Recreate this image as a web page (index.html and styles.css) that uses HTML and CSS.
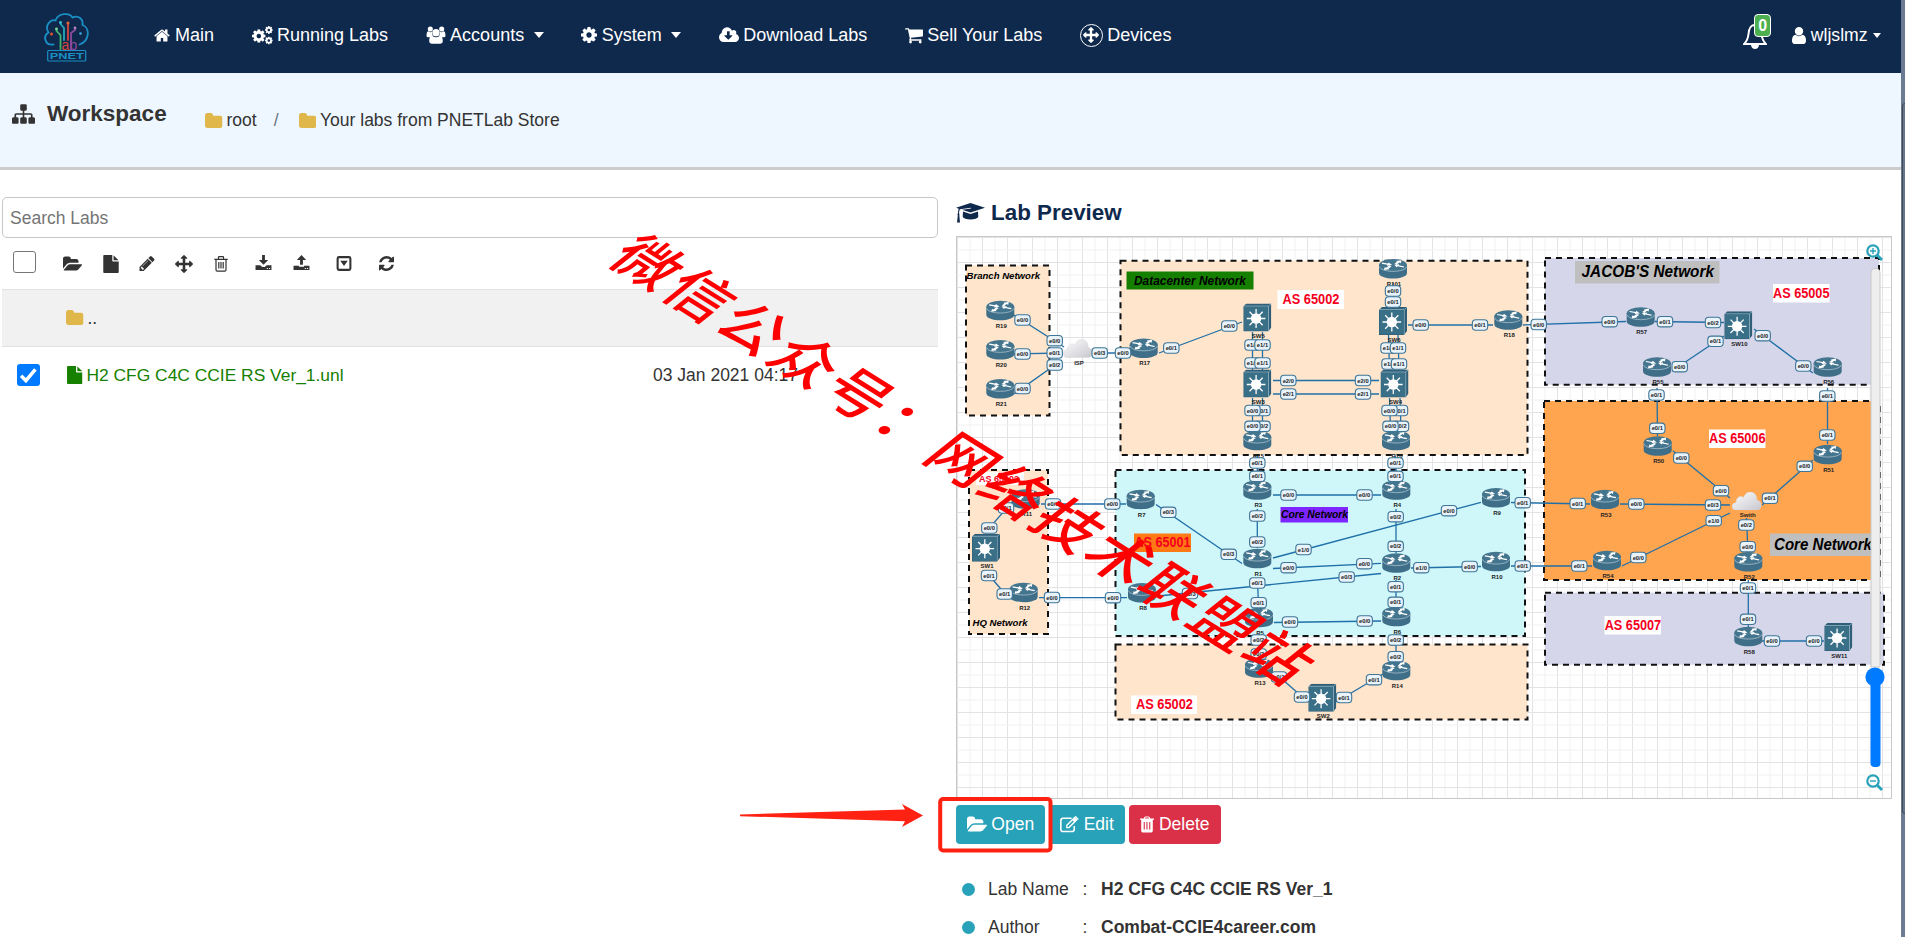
FILE: index.html
```html
<!DOCTYPE html>
<html lang="en">
<head>
<meta charset="utf-8">
<title>PNETLab - Workspace</title>
<link rel="stylesheet" href="styles.css">
</head>
<body>
<svg class="sprite" aria-hidden="true">
  <symbol id="home" viewBox="0 0 1792 1792"><path d="M1472 992v480q0 26-19 45t-45 19h-384v-384h-256v384h-384q-26 0-45-19t-19-45v-480q0-1 .5-3t.5-3l575-474 575 474q1 2 1 6zm223-69l-62 74q-8 9-21 11h-3q-13 0-21-7l-692-577-692 577q-12 8-24 7-13-2-21-11l-62-74q-8-10-7-23.5t11-21.5l719-599q32-26 76-26t76 26l244 204v-195q0-14 9-23t23-9h192q14 0 23 9t9 23v408l219 182q10 8 11 21.5t-7 23.5z"/></symbol>
  <symbol id="cog" viewBox="128 128 1536 1536"><path d="M1152 896q0-106-75-181t-181-75-181 75-75 181 75 181 181 75 181-75 75-181zm512-109v222q0 12-8 23t-20 13l-185 28q-19 54-39 91 35 50 107 138 10 12 10 25t-9 23q-27 37-99 108t-94 71q-12 0-26-9l-138-108q-44 23-91 38-16 136-29 186-7 28-36 28h-222q-14 0-24.5-8.5t-11.5-21.5l-28-184q-49-16-90-37l-141 107q-10 9-25 9-14 0-25-11-126-114-165-168-7-10-7-23 0-12 8-23 15-21 51-66.5t54-70.5q-27-50-41-99l-183-27q-13-2-21-12.5t-8-23.5v-222q0-12 8-23t19-13l186-28q14-46 39-92-40-57-107-138-10-12-10-24 0-10 9-23 26-36 98.5-107.5t94.5-71.5q13 0 26 10l138 107q44-23 91-38 16-136 29-186 7-28 36-28h222q14 0 24.5 8.5t11.5 21.5l28 184q49 16 90 37l142-107q9-9 24-9 13 0 25 10 129 119 165 170 7 8 7 22 0 12-8 23-15 21-51 66.5t-54 70.5q26 50 41 98l183 28q13 2 21 12.5t8 23.5z"/></symbol>
  <symbol id="cogs" viewBox="0 0 20 18"><use href="#cog" x="0" y="3" width="13" height="13"/><use href="#cog" x="12.3" y="0" width="7.5" height="7.5"/><use href="#cog" x="12.3" y="10" width="7.5" height="7.5"/></symbol>
  <symbol id="users" viewBox="0 0 20 19"><circle cx="4" cy="3.2" r="2.7"/><circle cx="16" cy="3.2" r="2.7"/><path d="M0 10.500C0 7 .8 5.600 2 5.600q2 1.600 4 .4-.8 3.400.8 4.500-2 .3-2.600 1.500H1.600Q0 12 0 10.500zM20 10.500C20 7 19.200 5.600 18 5.600q-2 1.600-4 .4.8 3.400-.8 4.500 2 .3 2.600 1.500h2.600Q20 12 20 10.500z"/><circle cx="10" cy="7" r="3.900"/><path d="M2.800 16.200c0-4 1-5.700 3.400-5.700q3.800 2.600 7.600 0c2.400 0 3.400 1.700 3.400 5.700q0 2.500-2.500 2.500H5.300q-2.500 0-2.500-2.500z"/></symbol>
  <symbol id="cloud" viewBox="-64 128 1920 1472"><path d="M1216 928q0-14-9-23t-23-9h-224v-352q0-13-9.500-22.500t-22.500-9.500h-192q-13 0-22.500 9.500t-9.500 22.500v352h-224q-13 0-22.500 9.500t-9.500 22.500q0 14 9 23l352 352q9 9 23 9t23-9l351-351q10-12 10-24zm640 224q0 159-112.500 271.500t-271.500 112.500h-1088q-185 0-316.500-131.500t-131.500-316.500q0-130 70-240t188-165q-2-30-2-43 0-212 150-362t362-150q156 0 285.500 87t188.500 231q71-62 166-62 106 0 181 75t75 181q0 76-41 138 130 31 213.500 135.500t83.500 238.500z"/></symbol>
  <symbol id="cart" viewBox="64 192 1664 1472"><path d="M704 1536q0 52-38 90t-90 38-90-38-38-90 38-90 90-38 90 38 38 90zm896 0q0 52-38 90t-90 38-90-38-38-90 38-90 90-38 90 38 38 90zm128-1088v512q0 24-16.500 42.500t-40.500 21.500l-1044 122q13 60 13 70 0 16-24 64h920q26 0 45 19t19 45-19 45-45 19h-1024q-26 0-45-19t-19-45q0-11 8-31.500t16-36 21.500-40 15.500-29.500l-177-823h-204q-26 0-45-19t-19-45 19-45 45-19h256q16 0 28.500 6.500t19.500 15.500 13 24.500 8 26 5.500 29.500 4.500 26h1201q26 0 45 19t19 45z"/></symbol>
  <symbol id="arrows" viewBox="0 0 1792 1792"><path d="M1792 896q0 26-19 45l-256 256q-19 19-45 19t-45-19-19-45v-128h-384v384h128q26 0 45 19t19 45-19 45l-256 256q-19 19-45 19t-45-19l-256-256q-19-19-19-45t19-45 45-19h128v-384h-384v128q0 26-19 45t-45 19-45-19l-256-256q-19-19-19-45t19-45l256-256q19-19 45-19t45 19 19 45v128h384v-384h-128q-26 0-45-19t-19-45 19-45l256-256q19-19 45-19t45 19l256 256q19 19 19 45t-19 45-45 19h-128v384h384v-128q0-26 19-45t45-19 45 19l256 256q19 19 19 45z"/></symbol>
  <symbol id="user" viewBox="256 128 1280 1536"><path d="M1536 1399q0 109-62.500 187t-150.500 78h-854q-88 0-150.500-78t-62.500-187q0-85 8.500-160.500t31.500-152 58.500-131 94-89 134.500-34.500q131 128 313 128t313-128q76 0 134.500 34.500t94 89 58.500 131 31.500 152 8.500 160.500zm-256-887q0 159-112.500 271.500t-271.500 112.500-271.500-112.500-112.500-271.500 112.500-271.500 271.500-112.500 271.500 112.500 112.500 271.500z"/></symbol>
  <symbol id="sitemap" viewBox="0 128 1792 1536"><path d="M1792 1248v320q0 40-28 68t-68 28h-320q-40 0-68-28t-28-68v-320q0-40 28-68t68-28h96v-192h-512v192h96q40 0 68 28t28 68v320q0 40-28 68t-68 28h-320q-40 0-68-28t-28-68v-320q0-40 28-68t68-28h96v-192h-512v192h96q40 0 68 28t28 68v320q0 40-28 68t-68 28h-320q-40 0-68-28t-28-68v-320q0-40 28-68t68-28h96v-192q0-52 38-90t90-38h512v-192h-96q-40 0-68-28t-28-68v-320q0-40 28-68t68-28h320q40 0 68 28t28 68v320q0 40-28 68t-68 28h-96v192h512q52 0 90 38t38 90v192h96q40 0 68 28t28 68z"/></symbol>
  <symbol id="folder" viewBox="64 128 1664 1408"><path d="M1728 608v704q0 92-66 158t-158 66h-1216q-92 0-158-66t-66-158v-960q0-92 66-158t158-66h320q92 0 158 66t66 158v32h672q92 0 158 66t66 158z"/></symbol>
  <symbol id="folder-open" viewBox="-64 128 1880 1408"><path d="M1815 952q0 31-31 66l-336 396q-43 51-120.500 86.500t-143.500 35.500h-1088q-34 0-60.500-13t-26.500-43q0-31 31-66l336-396q43-51 120.500-86.500t143.500-35.500h1088q34 0 60.500 13t26.500 43zm-343-344v160h-832q-94 0-197 47.500t-164 119.500l-337 396-5 6q0-4-.5-12.500t-.5-12.500v-960q0-92 66-158t158-66h320q92 0 158 66t66 158v32h544q92 0 158 66t66 158z"/></symbol>
  <symbol id="file" viewBox="128 0 1536 1792"><path d="M1152 512v-472q22 14 36 28l408 408q14 14 28 36h-472zm-128 32q0 40 28 68t68 28h544v1056q0 40-28 68t-68 28h-1344q-40 0-68-28t-28-68v-1600q0-40 28-68t68-28h800v544z"/></symbol>
  <symbol id="pencil" viewBox="128 140 1520 1524"><path d="M491 1536l91-91-235-235-91 91v107h128v128h107zm523-928q0-22-22-22-10 0-17 7l-542 542q-7 7-7 17 0 22 22 22 10 0 17-7l542-542q7-7 7-17zm-54-192l416 416-832 832h-416v-416zm683 96q0 53-37 90l-166 166-416-416 166-165q36-38 90-38 53 0 91 38l235 234q37 39 37 91z"/></symbol>
  <symbol id="refresh" viewBox="128 128 1536 1536"><path d="M1639 1056q0 5-1 7-64 268-268 434.500t-478 166.500q-146 0-282.500-55t-243.500-157l-129 129q-19 19-45 19t-45-19-19-45v-448q0-26 19-45t45-19h448q26 0 45 19t19 45-19 45l-137 137q71 66 161 102t187 36q134 0 250-65t186-179q11-17 53-117 8-23 30-23h192q13 0 22.500 9.500t9.500 22.500zm25-800v448q0 26-19 45t-45 19h-448q-26 0-45-19t-19-45 19-45l138-138q-148-137-349-137-134 0-250 65t-186 179q-11 17-53 117-8 23-30 23h-199q-13 0-22.500-9.500t-9.500-22.500v-7q65-268 270-434.500t480-166.500q146 0 284 55.500t245 156.500l130-129q19-19 45-19t45 19 19 45z"/></symbol>
  <symbol id="trash-o" viewBox="0 0 14 16"><path fill="none" stroke="currentColor" stroke-width="1.200" d="M.3 3.300h13.400M4.500 3V1.300q0-.6.6-.6h3.800q.6 0 .6.6V3M2 3.500v10.300q0 1.300 1.200 1.300h7.600q1.200 0 1.200-1.300V3.500M4.800 6v6.500M7 6v6.500M9.200 6v6.500"/></symbol>
  <symbol id="trash" viewBox="0 0 14 16"><path fill-rule="evenodd" d="M0 3V2h3.700l.8-1.500Q4.800 0 5.400 0h3.200q.6 0 .9.500L10.300 2H14v1.200h-1.200v11Q12.800 16 11.300 16H2.700Q1.200 16 1.200 14.200v-11H0zm5-1h4L8.500 1h-3zM3.700 5.500v7.500h1.100V5.500zm2.700 0v7.500h1.100V5.500zm2.800 0v7.500h1.100V5.500z"/></symbol>
  <symbol id="download" viewBox="0 0 17 16"><path fill-rule="evenodd" d="M7 0h3v5.300h3.500L8.500 10.300 3.500 5.300H7zM0 11h5l2.200 1.700h2.600L12 11h5v5H0zm12 2.800v1h1.200v-1zm2.400 0v1h1.200v-1z"/></symbol>
  <symbol id="upload" viewBox="0 0 17 16"><path fill-rule="evenodd" d="M7 10.500h3V5.200h3.500L8.500 0 3.500 5.200H7zM0 11.500h5.800v1h5.400v-1H17V16H0zm12 2.300v1h1.200v-1zm2.400 0v1h1.200v-1z"/></symbol>
  <symbol id="caret-sq" viewBox="0 0 16 16"><rect x="1.200" y="1.200" width="13.600" height="13.600" rx="1.500" fill="none" stroke="currentColor" stroke-width="2.200"/><path d="M4 5h8l-4 5.600z"/></symbol>
  <symbol id="cap" viewBox="0 0 29 20"><path d="M14.500 0L29 4.800 14.500 9.600 6 6.800l9-1.300-.2-.8L4 6.200Q3 7.500 3 10.500q1 .8.300 1.800L4 19.500H1l.8-7.200Q1 11.500 2 10.300 2 7.500 2.700 5.700L0 4.800z"/><path d="M7 8.500l7.500 2.500L22 8.500l.3 5q0 1.500-2.600 2.300-5.200 1.600-10.400 0Q6.700 15 6.700 13.500z"/></symbol>
  <symbol id="edit" viewBox="0 0 18 16"><path fill="none" stroke="currentColor" stroke-width="1.500" d="M13.500 9.500v3q0 2.200-2.200 2.200H3q-2.200 0-2.200-2.200V4.200Q.8 2 3 2h8"/><path fill-rule="evenodd" d="M5.800 8.500L13.600.7l3 3L8.800 11.500H5.800zm1.200.8v1h1l5-5-1-1zM14.200.2q.7-.4 1.300.2l1.800 1.800q.5.600 0 1.200l-.4.400-3.100-3.100z"/></symbol>
  <symbol id="zoom-in" viewBox="0 0 17 17"><circle cx="7" cy="7" r="5.700" fill="none" stroke="currentColor" stroke-width="2.200"/><path stroke="currentColor" stroke-width="2.800" d="M11.300 11.300l4.700 4.700"/><path stroke="currentColor" stroke-width="1.400" d="M4 7h6M7 4v6"/></symbol>
  <symbol id="zoom-out" viewBox="0 0 17 17"><circle cx="7" cy="7" r="5.700" fill="none" stroke="currentColor" stroke-width="2.200"/><path stroke="currentColor" stroke-width="2.800" d="M11.300 11.300l4.700 4.700"/><path stroke="currentColor" stroke-width="1.400" d="M4 7h6"/></symbol>
  <symbol id="router" viewBox="0 0 28 20" overflow="visible"><path d="M0 6v8c0 7.300 28 7.300 28 0V6z" fill="#3f6f88"/><ellipse cx="14" cy="6.200" rx="14" ry="6.200" fill="#44758e"/><path d="M.2 7.500c1.300 6.500 26.300 6.500 27.600 0" fill="none" stroke="#9bb6c4" stroke-width=".9"/><path fill="#fff" d="M3 3.600l6 1 .6-1.200 3.600 2.700-5.200.6.300-1-5.600-1zM24.600 8.500l-6-1.300-.9 1.100-2.500-2.500 5-.6-.4 1 5.400 1.200zM15.500 4.700l2.500-2-1-.6 5.500-.9-.6 3-1.500-.8-2.700 2.100zM12.500 7.400l-3 2.200 1 .7-5.600.7.800-2.800 1.300.6 3.200-2.200z"/></symbol>
  <symbol id="switch" viewBox="0 0 28 28"><path d="M0 3l3-3h25v24l-3 4H0z" fill="#2f5f78"/><path d="M.5 2.600h24.700v25M25.200 2.600L28 .2" fill="none" stroke="#8fb0bf" stroke-width=".9"/><rect x=".6" y="3.300" width="24" height="24" fill="#3a6f88"/><g stroke="#fff" stroke-width="1.300"><path d="M12.800 5.500v19M3.500 15h18.600M6.200 8.300l13.200 13.400M19.400 8.300L6.200 21.700"/></g><circle cx="12.800" cy="15" r="5.200" fill="#fff"/></symbol>
  <linearGradient id="cg" x1="0" y1="0" x2="1" y2="1"><stop offset="0" stop-color="#fff"/><stop offset="1" stop-color="#c6c6ce"/></linearGradient>
  <symbol id="net" viewBox="0 0 30 19"><path fill="url(#cg)" stroke="#d6d6da" stroke-width=".5" d="M4 18.500C-1 18.300-.8 11.300 4.500 11 4 5.500 9.500 3.500 12 6c2.500-8.500 14-6.500 13 2.500 6 .8 6 9.700.5 10z"/></symbol>
</svg>

<header class="navbar">
  <svg class="logo" viewBox="0 0 46 50" stroke-width="1.800" stroke-linecap="round">
    <path stroke="#1b8fc4" d="M9.500 32.500C1 34 -1.500 24 4.500 20.500 0 13 7 7 11.500 8.500 14 .5 26 .5 28.500 5.500c6-2.500 11 1.500 10 7.500 7.500 2.500 7.500 16-3 19.500"/>
    <path stroke="#3cb56a" d="M16.500 37V23l-4-4v-2"/><path stroke="#24a8b8" d="M20 28V16l-3.500-4v-1"/><path stroke="#d8483d" d="M24 28V12"/><path stroke="#8c4a9c" d="M27 37V21l4-3v-2"/>
    <circle cx="12.500" cy="17" r="1.400" fill="#7bd78e"/><circle cx="16.500" cy="10.500" r="1.400" fill="#38c0d8"/><circle cx="24" cy="11" r="1.500" fill="#e86a30"/><circle cx="31" cy="16" r="1.400" fill="#b080c0"/><circle cx="7.500" cy="22" r="1.500" fill="#e0552d"/><circle cx="36.500" cy="21.500" r="1.300" fill="#3ab0e0"/>
    <text x="17.500" y="37.500" class="logo-a">a</text><text x="25.500" y="37.500" class="logo-b">b</text>
    <rect x="3.700" y="38.500" width="38" height="10.500" rx="1" stroke="#1b8fc4" stroke-width="1.200"/>
    <text x="5.700" y="47.100" class="logo-t" textLength="34" lengthAdjust="spacingAndGlyphs">PNET</text>
  </svg>
  <nav class="menu">
    <a class="item main"><svg class="i17"><use href="#home"/></svg>Main</a>
    <a class="item"><svg class="i21"><use href="#cogs"/></svg>Running Labs</a>
    <a class="item accounts"><svg class="i20"><use href="#users"/></svg>Accounts<i class="caret"></i></a>
    <a class="item system"><svg class="i16"><use href="#cog"/></svg>System<i class="caret"></i></a>
    <a class="item"><svg class="i20"><use href="#cloud"/></svg>Download Labs</a>
    <a class="item"><svg class="i17"><use href="#cart"/></svg>Sell Your Labs</a>
    <a class="item"><span class="ring"><svg><use href="#arrows"/></svg></span>Devices</a>
  </nav>
  <div class="bell">
    <svg viewBox="0 0 24 26"><path class="line" d="M12 2C7 2 6 6 5.500 11 5 16 4 18 1.200 21h21.600C20 18 19 16 18.500 11 18 6 17 2 12 2z" stroke="#fff" stroke-width="2"/><path d="M8 22h8q-.5 4-4 4t-4-4z" fill="#fff"/></svg>
    <span class="badge">0</span>
  </div>
  <a class="account"><svg><use href="#user"/></svg>wljslmz<i class="caret"></i></a>
</header>

<section class="band">
  <h1><svg><use href="#sitemap"/></svg>Workspace</h1>
  <div class="crumbs"><svg class="fold"><use href="#folder"/></svg><span>root</span><span class="slash">/</span><svg class="fold"><use href="#folder"/></svg><span>Your labs from PNETLab Store</span></div>
</section>

<main class="cols">
  <section class="files">
    <input class="search" placeholder="Search Labs">
    <div class="tools">
      <span class="check"></span>
      <svg class="t1"><use href="#folder-open"/></svg><svg class="t2"><use href="#file"/></svg><svg class="t3"><use href="#pencil"/></svg><svg class="t4"><use href="#arrows"/></svg><svg class="t5"><use href="#trash-o"/></svg><svg class="t6"><use href="#download"/></svg><svg class="t7"><use href="#upload"/></svg><svg class="t8"><use href="#caret-sq"/></svg><svg class="t9"><use href="#refresh"/></svg>
    </div>
    <div class="row up"><svg class="fold"><use href="#folder"/></svg><span>..</span></div>
    <div class="row lab">
      <span class="check on"><svg viewBox="0 0 22 22"><path d="M4 11.500l4.700 4.700L18 5.200" fill="none" stroke="#fff" stroke-width="3.400"/></svg></span>
      <span class="name"><svg><use href="#file"/></svg>H2 CFG C4C CCIE RS Ver_1.unl</span>
      <span class="date">03 Jan 2021 04:17</span>
    </div>
  </section>

  <section class="preview">
    <h2><svg><use href="#cap"/></svg>Lab Preview</h2>
    <svg class="canvas" id="canvas" viewBox="957 237 934 561"></svg>
    <div class="actions">
      <button class="btn open"><svg class="i20"><use href="#folder-open"/></svg>Open</button>
      <button class="btn edit"><svg class="i19"><use href="#edit"/></svg>Edit</button>
      <button class="btn del"><svg class="i14"><use href="#trash"/></svg>Delete</button>
    </div>
    <ul class="info">
      <li><i></i><span class="k">Lab Name</span><span class="c">:</span><b>H2 CFG C4C CCIE RS Ver_1</b></li>
      <li><i></i><span class="k">Author</span><span class="c">:</span><b>Combat-CCIE4career.com</b></li>
    </ul>
  </section>
</main>

<div class="scrollbar"><span></span></div>

<svg class="overlay" viewBox="0 0 1905 937">
  <text class="mark" transform="matrix(.848 .53 -.8 .64 605.500 261)">微信公众号：网络技术联盟站</text>
  <rect x="940.200" y="799" width="110.300" height="51.500" rx="3" fill="none" stroke="#ff2213" stroke-width="4"/>
  <path d="M740 814.500l165-5-3-5.500 21 11.500-21 11.500 3-5.800-165-5z" fill="#ff2213"/>
</svg>
<script src="diagram.js"></script>
</body>
</html>
```
FILE: styles.css
```css
* { box-sizing: border-box; }
html, body { height: 100%; }
body { margin: 0; overflow: hidden; position: relative; background: #fff; color: #333; font: 17.500px/1.5 "Liberation Sans", Arial, sans-serif; }
svg { fill: currentColor; flex: none; }
.sprite { position: absolute; width: 0; height: 0; }

.navbar { display: flex; height: 73px; padding: 0 24px 3px 44px; background: #0f294d; color: #fff; align-items: center; white-space: nowrap; }
.logo { width: 46px; height: 50px; margin-top: 3px; fill: none; }
.logo-a, .logo-b { font: 14px "Liberation Sans", sans-serif; fill: #d8483d; }
.logo-b { fill: #8c4a9c; }
.logo-t { font: bold 9px "Liberation Sans", sans-serif; fill: #1b8fc4; }
.menu { display: flex; gap: 37.500px; margin-left: 62.500px; height: 100%; align-items: center; font-size: 18px; }
.item { display: flex; align-items: center; gap: 4.500px; }
.i14 { width: 14px; height: 17px; }
.i16 { width: 16px; height: 16px; }
.i17 { width: 17px; height: 17px; }
.i19 { width: 19px; height: 17px; }
.i20 { width: 20px; height: 18px; }
.i21 { width: 21px; height: 19px; }
.menu .i17 { width: 18px; }
.caret { border: 5.500px solid transparent; border-top: 6.500px solid #fff; border-bottom: 0; margin-left: 5px; }
.ring { display: flex; width: 23px; height: 23px; border: 1.500px solid #fff; border-radius: 50%; align-items: center; justify-content: center; }
.ring svg { width: 16px; height: 16px; }
.bell { position: relative; margin-left: auto; width: 24px; height: 26px; margin-top: 1px; }
.bell svg { display: block; width: 24px; height: 26px; }
.line { fill: none; }
.badge { position: absolute; left: 11px; top: -9px; width: 17px; height: 23px; border: 1px solid #fff; border-radius: 4px; background: #4caf50; font: bold 16px/21px "Liberation Sans", sans-serif; text-align: center; }
.account { display: flex; align-items: center; gap: 4.500px; margin: 1px 0 0 25px; font-size: 17.600px; }
.account svg { width: 14px; height: 17px; }
.account .caret { margin-left: 1px; border-width: 5px 4.500px 0; }

.band { display: flex; height: 97px; background: #eef7ff; border-bottom: 3px solid #ccc; padding-left: 12px; align-items: flex-start; white-space: nowrap; }
.band h1 { display: flex; align-items: center; gap: 12px; margin: 27px 0 0; width: 193px; font-size: 22.500px; line-height: 28px; }
.band h1 svg { width: 23px; height: 20px; }
.crumbs { display: flex; align-items: center; margin-top: 34px; }
.fold { width: 17.500px; height: 15px; color: #dfb74b; margin-right: 4px; }
.slash { color: #6c757d; margin: 0 20px 0 17px; }

.cols { display: flex; padding-left: 2px; }
.files { width: 936px; padding-top: 27px; }
.search { display: block; width: 936px; height: 41px; border: 1px solid #c8c8c8; border-radius: 5px; padding: 2px 7px 0; font: inherit; }
.search::placeholder { color: #757575; }
.tools { display: flex; align-items: center; height: 51px; padding-left: 11px; color: #333; }
.check { width: 22.500px; height: 22px; border: 1.500px solid #767676; border-radius: 3px; background: #fff; flex: none; }
.tools .check { margin-top: -4px; }
.check.on { border: 0; background: #007bff; margin-top: -2px; }
.check svg { display: block; }
.t1 { width: 19px; height: 15px; margin-left: 27px; }
.t2 { width: 16px; height: 18px; margin-left: 21px; }
.t3 { width: 16px; height: 15px; margin-left: 20px; }
.t4 { width: 18px; height: 18px; margin-left: 20.500px; }
.t5 { width: 14px; height: 16px; margin-left: 21px; }
.t6 { width: 17px; height: 15px; margin: -2px 0 0 27px; }
.t7 { width: 17px; height: 15px; margin: -2px 0 0 21px; }
.t8 { width: 16px; height: 15px; margin-left: 26px; }
.t9 { width: 17px; height: 15px; margin-left: 26px; }
.row { display: flex; align-items: center; border-top: 1px solid #dee2e6; white-space: nowrap; }
.up { height: 57px; padding-left: 64px; background: #f1f1f1; }
.up .fold { margin-top: -2px; }
.lab { height: 57px; padding: 1px 0 0 15px; }
.name { display: flex; align-items: center; gap: 4px; width: 586px; margin-left: 27.500px; color: #168000; font-size: 17.400px; }
.name svg { width: 15.500px; height: 18px; margin-top: -1px; }

.preview { margin-left: 18px; width: 936px; padding-top: 29px; }
.preview h2 { display: flex; align-items: center; gap: 6px; height: 28px; margin: 0 0 9px; font-size: 22.400px; color: #0f294d; }
.preview h2 svg { width: 29px; height: 20px; }
.canvas { display: block; width: 936px; height: 563px; border: 1px solid #c8c8c8; }
.actions { display: flex; gap: 4px; margin-top: 6px; }
.btn { display: flex; height: 39px; border: 0; border-radius: 4px; padding: 0 0 1px; font: inherit; color: #fff; background: #27a2b8; align-items: center; justify-content: center; gap: 4.500px; }
.open { width: 89px; }
.edit { width: 76px; }
.del { width: 92px; background: #da3048; }
.info { list-style: none; margin: 26px 0 0; padding: 0 0 0 6px; }
.info li { display: flex; align-items: center; height: 38px; }
.info i { width: 13px; height: 13px; border-radius: 50%; background: #27a2b8; }
.k { margin-left: 13px; width: 94.500px; }
.c { width: 18.500px; }

.scrollbar { position: absolute; right: 0; top: 0; width: 4px; height: 937px; background: #6b7b92; }
.scrollbar span { position: absolute; top: 103px; left: 1px; width: 6px; height: 711px; border: 1px solid #3f4a59; border-radius: 3px; background: #66758a; }
.overlay { position: absolute; left: 0; top: 0; width: 1905px; height: 937px; pointer-events: none; }
.mark { font: 500 59px "Noto Sans CJK SC", sans-serif; letter-spacing: 3px; fill: #f00; }

.area { stroke: #111; stroke-width: 2; stroke-dasharray: 6 5; }
.wire { stroke: #1f6fa8; stroke-width: 1.300; }
.port { fill: #e8f3fb; stroke: #3f7596; stroke-width: 1.100; }
.pt { font: bold 5.800px "Liberation Sans", sans-serif; fill: #222; text-anchor: middle; }
.nt { font: bold 6px "Liberation Sans", sans-serif; fill: #222; text-anchor: middle; }
.note { font-weight: bold; font-family: "Liberation Sans", sans-serif; fill: #000; }
.it { font-style: italic; }
.red { fill: #f5001d; }
.zoom { color: #27a2b8; }
```
FILE: diagram.js
```js
// Topology drawing: areas, wires, nodes, port labels and notes.
const peach = '#ffe5cc', lilac = '#d6d6ea';
const areas = [
  [966, 265.5, 1049.5, 415.5, peach], [1120.5, 260.7, 1527.5, 455, peach], [969, 470, 1048, 634, peach],
  [1115.5, 470, 1525, 636, '#cff7fa'], [1115.5, 644.5, 1527.5, 719.5, peach],
  [1545, 258, 1879, 384.7, lilac], [1544, 401, 1880, 580, '#ffa550'], [1545, 592.7, 1884, 664.7, lilac]
];
const nodes = [
  ['R19', 1000.3, 310.7], ['R20', 1000.3, 350], ['R21', 1000.3, 389], ['R17', 1143.7, 348.5], ['R101', 1393, 269],
  ['R18', 1508.3, 320.3], ['R15', 1257.3, 440.7], ['R16', 1396, 440.7], ['R11', 1025.7, 499.3], ['R12', 1023.7, 592.7],
  ['R7', 1140.7, 499.7], ['R8', 1142, 593], ['R3', 1257.3, 490.3], ['R4', 1396.3, 490.3], ['R1', 1257.3, 558.7],
  ['R2', 1396.3, 563.3], ['R9', 1496, 498], ['R10', 1496, 561.7], ['R5', 1259, 617.7], ['R6', 1396.3, 616.7],
  ['R13', 1259, 668.3], ['R14', 1396.3, 670.7], ['R57', 1640.7, 317.3], ['R55', 1657, 367.3], ['R56', 1827.7, 367.3],
  ['R50', 1657.7, 446.3], ['R51', 1827.7, 454.7], ['R53', 1605, 499.7], ['R54', 1607, 560.7], ['R52', 1748.3, 562],
  ['R58', 1748.3, 636.7],
  ['SW5', 1257.3, 317.5, 's'], ['SW3', 1257.3, 383.5, 's'], ['SW6', 1393, 321, 's'], ['SW4', 1394.5, 383.5, 's'],
  ['SW1', 986, 547.7, 's'], ['SW2', 1322.3, 697.7, 's'], ['SW10', 1738.3, 325.3, 's'], ['SW11', 1838.3, 637, 's'],
  ['ISP', 1078, 348.5, 'c'], ['Swith', 1746.7, 501, 'c']
];
// x1, y1, x2, y2, then label, x, y for each end
const links = [
  [1014, 315, 1064, 347, 'e0/0', 1022.5, 320, 'e0/0', 1054.7, 340.7],
  [1014, 354, 1062, 353, 'e0/0', 1022.5, 354, 'e0/1', 1054.7, 353],
  [1014, 394, 1062, 360, 'e0/0', 1022.5, 388.5, 'e0/2', 1054.7, 365],
  [1090, 353, 1130, 353, 'e0/3', 1099.7, 353, 'e0/0', 1123, 353],
  [1159, 353, 1242, 322, 'e0/1', 1171.3, 348, 'e0/0', 1229.3, 326],
  [1252.5, 332, 1252.5, 370, 'e1/0', 1252.5, 345, 'e1/0', 1252.5, 363],
  [1262.5, 332, 1262.5, 370, 'e1/1', 1262.5, 345, 'e1/1', 1262.5, 363],
  [1262.5, 398, 1262.5, 430, 'e0/1', 1262.5, 410.5, 'e0/2', 1262.5, 426.3],
  [1252.5, 398, 1252.5, 430, 'e0/0', 1252.5, 410.5, 'e0/0', 1252.5, 426.3],
  [1273, 380.5, 1379, 380.5, 'e2/0', 1288.3, 380.5, 'e2/0', 1363, 380.5],
  [1273, 394, 1379, 394, 'e2/1', 1288.3, 394, 'e2/1', 1363, 394],
  [1388.5, 335, 1389.5, 370, 'e1/0', 1388.5, 348, 'e1/0', 1389.5, 364],
  [1398, 335, 1399, 370, 'e1/1', 1398, 348, 'e1/1', 1399, 364],
  [1400, 398, 1401, 430, 'e0/1', 1400, 410.5, 'e0/2', 1401, 426.3],
  [1389.5, 398, 1390.5, 430, 'e0/0', 1389.5, 410.5, 'e0/0', 1390.5, 426.3],
  [1393, 283, 1393, 306, 'e0/0', 1393, 291, 'e0/1', 1393, 302],
  [1408, 325, 1493, 325, 'e0/0', 1420.7, 325, 'e0/1', 1480, 325],
  [1523, 325, 1626, 321.500, 'e0/0', 1538.7, 324.5, 'e0/0', 1609.7, 321.7],
  [1655, 321.5, 1724, 322.5, 'e0/1', 1665, 321.7, 'e0/2', 1713, 322.5],
  [1724, 336, 1672, 371, 'e0/1', 1715.5, 341.3, 'e0/0', 1679.7, 366.7],
  [1754, 329, 1813, 373, 'e0/0', 1762.7, 335.7, 'e0/0', 1803.3, 366],
  [1657, 388, 1657.5, 436, 'e0/1', 1656.5, 395, 'e0/1', 1657.3, 428.3],
  [1827.5, 388, 1827.5, 444, 'e0/1', 1827.3, 396, 'e0/1', 1827.3, 435],
  [1673, 451, 1730, 498, 'e0/0', 1681.3, 458, 'e0/0', 1721, 490.7],
  [1813, 460, 1762, 505, 'e0/0', 1804.7, 466.3, 'e0/1', 1770, 498.3],
  [1620, 504, 1730, 505, 'e0/0', 1636.3, 504, 'e0/3', 1713, 505],
  [1511, 502.5, 1590, 504, 'e0/1', 1522.7, 502.7, 'e0/1', 1577.7, 503.5],
  [1622, 566, 1730, 513, 'e0/0', 1638.3, 557.5, 'e1/0', 1713.7, 520.7],
  [1511, 566, 1592, 566, 'e0/1', 1522.7, 566, 'e0/1', 1579.3, 566],
  [1746.5, 518, 1748, 553, 'e0/2', 1746.3, 525, 'e0/0', 1747.7, 546.7],
  [1748.3, 580, 1748.3, 628, 'e0/1', 1748, 588, 'e0/1', 1748, 619.3],
  [1762, 641, 1824, 641, 'e0/0', 1772, 641, 'e0/0', 1814, 641],
  [1257.3, 456, 1257.3, 482, 'e0/1', 1257.3, 463, 'e0/1', 1257.3, 476.3],
  [1395.5, 456, 1395.5, 482, 'e0/1', 1395.5, 463, 'e0/1', 1395.5, 476.3],
  [1273, 495, 1381, 495, 'e0/0', 1288.5, 495, 'e0/0', 1364.5, 495],
  [1257.3, 509, 1257.3, 548, 'e0/2', 1257.3, 516, 'e0/2', 1257.3, 542],
  [1396, 509, 1396, 553, 'e0/2', 1395.7, 516.7, 'e0/2', 1395.7, 546.3],
  [1273, 558, 1481, 502.3, 'e1/0', 1303.5, 549.5, 'e0/0', 1449, 510.7],
  [1273, 568.5, 1381, 563.3, 'e0/0', 1288.5, 567.7, 'e0/0', 1364.3, 563.7],
  [1158, 596, 1381, 573.5, 'e0/3', 1190, 593.5, 'e0/3', 1346.7, 577],
  [1156, 504.5, 1242, 563.5, 'e0/3', 1168.3, 512.3, 'e0/3', 1228.7, 554.3],
  [1411, 568, 1481, 566.5, 'e1/0', 1421.3, 567.7, 'e0/0', 1469.7, 566.5],
  [1257.5, 578, 1258.5, 608, 'e0/1', 1257.3, 583, 'e0/1', 1258.7, 602.7],
  [1396, 580, 1396, 607, 'e0/1', 1395.7, 586.7, 'e0/1', 1395.7, 602.3],
  [1274, 622.5, 1381, 621, 'e0/0', 1290, 622, 'e0/0', 1364.7, 621],
  [1259, 634, 1259, 660, 'e0/2', 1258.7, 640, 'e0/2', 1258.7, 654],
  [1396, 634, 1396, 662, 'e0/2', 1395.7, 640, 'e0/2', 1395.7, 656.7],
  [1274, 672, 1308, 702, 'e0/1', 1279, 677, 'e0/0', 1302, 697],
  [1383, 674, 1336, 702, 'e0/1', 1374, 679.7, 'e0/1', 1344, 697.5],
  [1041, 504, 1126, 504, 'e0/0', 1053, 504, 'e0/0', 1112.3, 504],
  [1039, 597.7, 1127, 597.7, 'e0/0', 1052, 597.5, 'e0/0', 1113, 597.7],
  [1012, 502, 985, 533, 'e0/1', 1006, 508, 'e0/0', 989.3, 528],
  [986, 572, 1008, 597, 'e0/1', 989, 575.5, 'e0/1', 1004.7, 594]
];
// text, x, baseline, width, font size, class, box [x, y, w, h, fill]
const notes = [
  ['Branch Network', 966.5, 279, 73.5, 9.6, 'it'],
  ['HQ Network', 972.5, 625.7, 55, 9.6, 'it'],
  ['Datacenter Network', 1134, 285, 112, 13, 'it', [1126.5, 271.5, 127, 18, '#158000']],
  ['AS 65002', 1282.5, 304, 57, 14, 'red', [1277.5, 290, 66.5, 19, '#fff']],
  ['AS 65002', 979, 482, 40, 9.6, 'red', [976, 472, 48, 13, '#fff']],
  ['AS 65001', 1134.5, 547, 56, 14, 'red', [1134, 533.5, 57, 18.5, '#ff7a14']],
  ['AS 65002', 1136, 709, 57, 14, 'red', [1131, 695.5, 66, 18.5, '#fff']],
  ['Core Network', 1281, 518, 67, 10, 'it', [1280.5, 507, 67.5, 15.5, '#7d26ff']],
  ["JACOB'S Network", 1581.5, 277, 132.5, 15.8, 'it', [1575, 261, 144.5, 22.5, '#bfbfbf']],
  ['AS 65005', 1773, 298, 56.5, 14, 'red', [1773, 284, 56.5, 18.5, '#fff']],
  ['AS 65006', 1709, 443, 56.5, 14, 'red', [1709, 429.5, 56.5, 18.5, '#fff']],
  ['AS 65007', 1604.7, 630, 56.5, 14, 'red', [1604.5, 616, 56.5, 18.5, '#fff']],
  ['Core Network', 1774, 550, 98, 15.8, 'it', [1770, 533.5, 101, 22.5, '#bfbfbf']]
];

let s = '';
for (let x = 957.5, i = 0; x < 1891; x += 12.5, i++) s += `<path d="M${x} 237V798" stroke="${i % 2 ? '#f1f1f3' : '#e3e3e5'}"/>`;
for (let y = 237.5, i = 0; y < 798; y += 12.5, i++) s += `<path d="M957 ${y}H1891" stroke="${i % 2 ? '#f1f1f3' : '#e3e3e5'}"/>`;
for (const [a, b, c, d, f] of areas) s += `<rect class="area" x="${a}" y="${b}" width="${c - a}" height="${d - b}" fill="${f}"/>`;
const note = ([t, x, y, w, size, cls, box]) =>
  (box ? `<rect x="${box[0]}" y="${box[1]}" width="${box[2]}" height="${box[3]}" fill="${box[4]}"/>` : '') +
  `<text class="note ${cls}" x="${x}" y="${y}" font-size="${size}" textLength="${w}" lengthAdjust="spacingAndGlyphs">${t}</text>`;
s += notes.map(note).join('');
for (const [a, b, c, d] of links) s += `<path class="wire" d="M${a} ${b}L${c} ${d}"/>`;
for (const [t, x, y, k] of nodes) {
  const [id, w, h, dy] = k === 's' ? ['switch', 28, 28, 20.5] : k === 'c' ? ['net', 30, 19, 16] : ['router', 28, 20, 16.8];
  s += `<use href="#${id}" x="${x - w / 2}" y="${y - h / 2}" width="${w}" height="${h}"/><text class="nt" x="${x + 1}" y="${y + dy}">${t}</text>`;
}
for (const l of links) for (let i = 4; i < l.length; i += 3)
  s += `<rect class="port" x="${l[i + 1] - 7.7}" y="${l[i + 2] - 5.2}" width="15.400" height="10.400" rx="3.500"/><text class="pt" x="${l[i + 1]}" y="${l[i + 2] + 2}">${l[i]}</text>`;
s += '<path d="M1871 667V273q0-4.500 4.500-4.500t4.500 4.500V667z" fill="#eee" stroke="#c8c8c8"/>' +
  '<rect x="1870.500" y="677" width="10" height="90" rx="4" fill="#007bff"/><circle cx="1875" cy="677" r="9.600" fill="#007bff"/>' +
  '<g class="zoom"><use href="#zoom-in" x="1866" y="244" width="17" height="17"/><use href="#zoom-out" x="1866" y="774" width="17" height="17"/></g>';
document.getElementById('canvas').innerHTML = s;
```
